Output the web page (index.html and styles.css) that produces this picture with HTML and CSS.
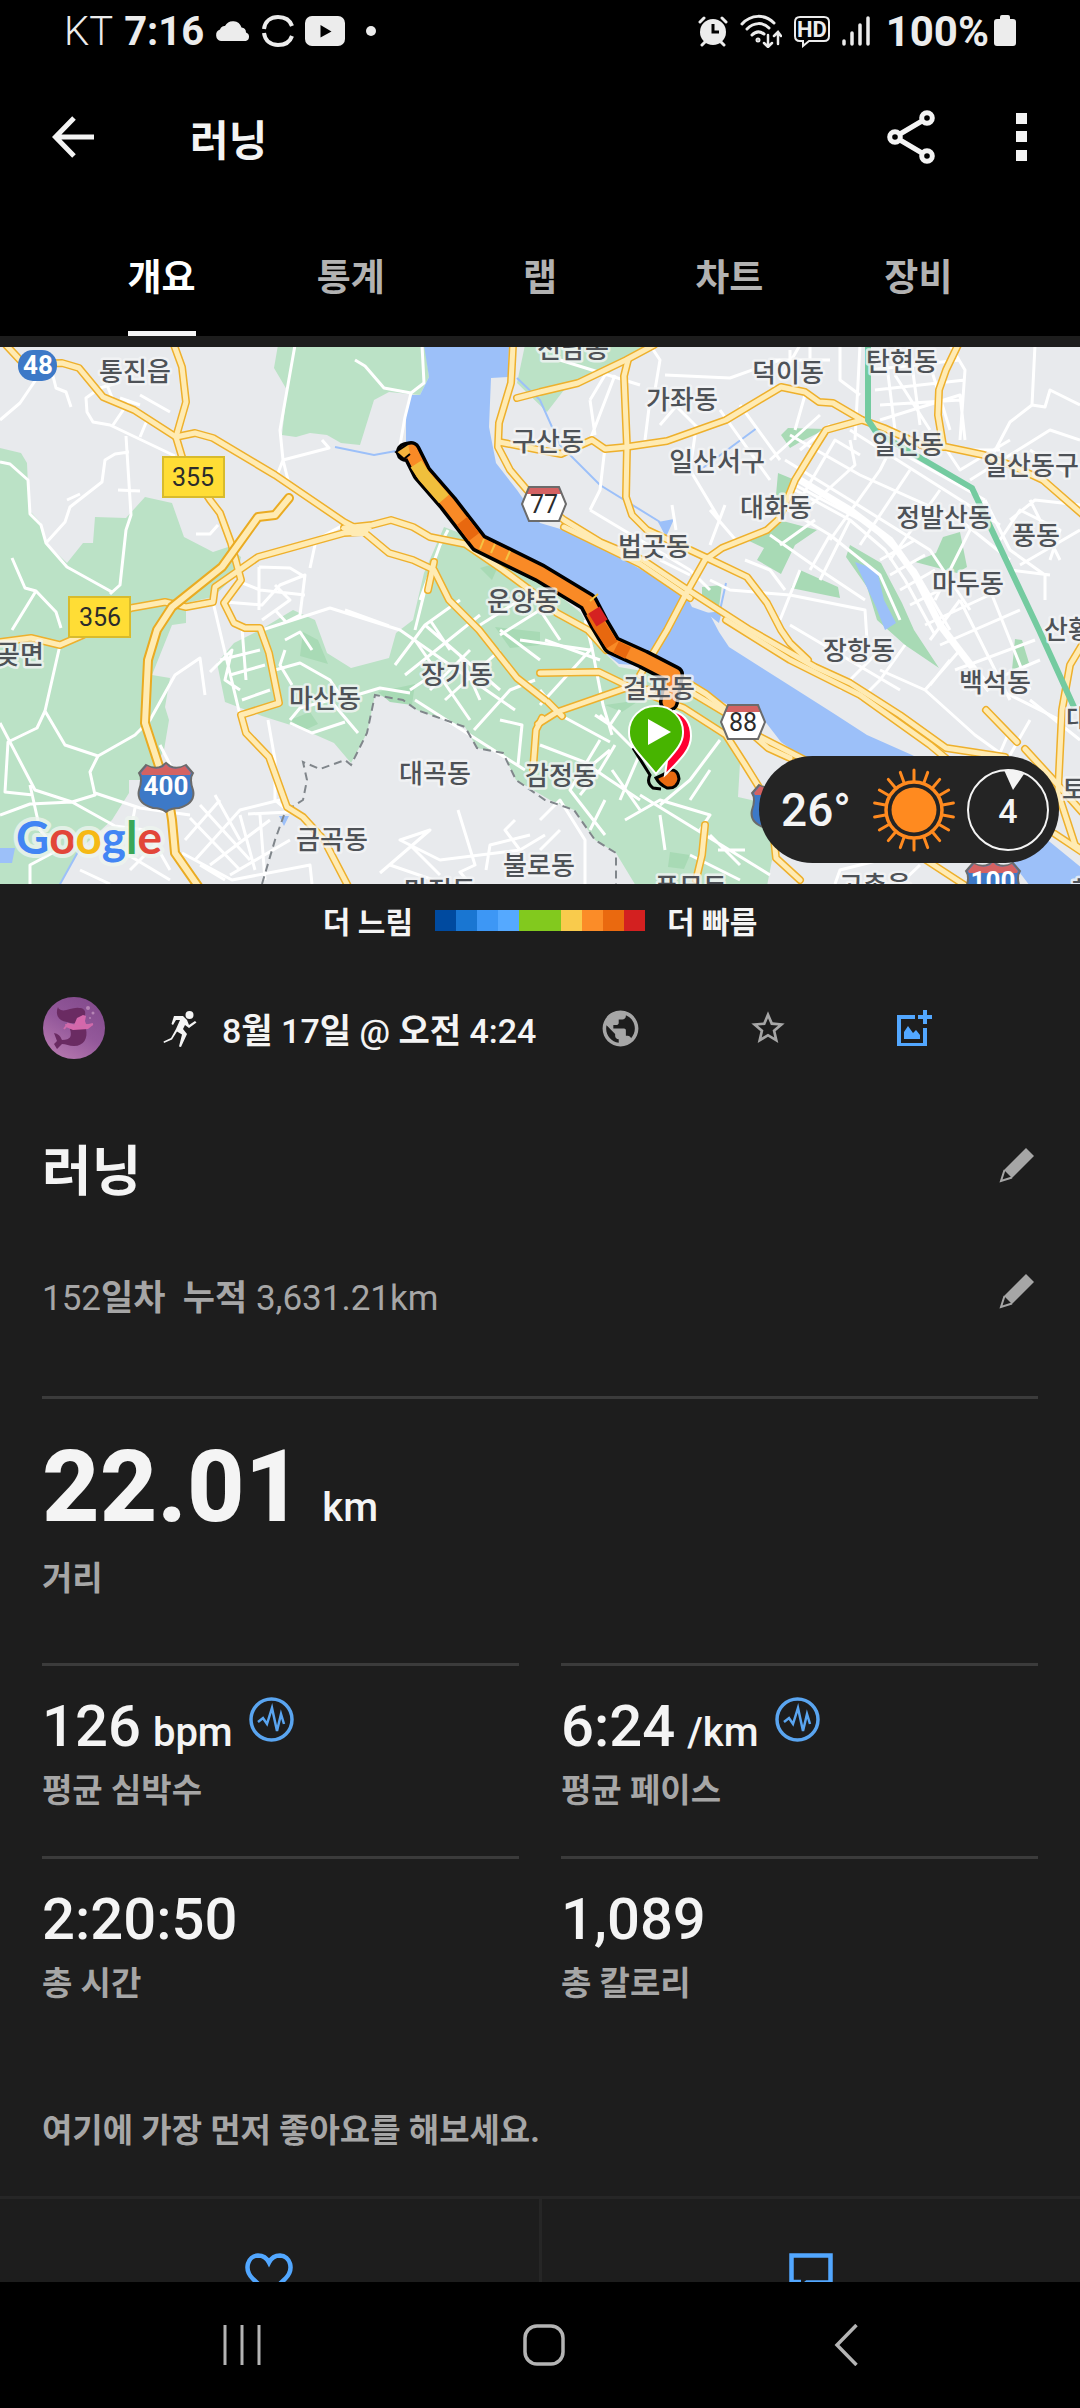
FILE: index.html
```html
<!DOCTYPE html>
<html lang="ko">
<head>
    <meta charset="UTF-8">
    <meta name="viewport" content="width=device-width, initial-scale=1.0">
    <title>러닝</title>
    <link rel="stylesheet" href="styles.css">
</head>
<body>
    <div class="app">
        <div class="status-bar">
            <div class="status-left">
                <span class="carrier">KT</span>
                <span class="clock">7:16</span>
                <svg class="cloud" width="36" height="22" viewBox="0 0 36 22" fill="#ececec"><path d="M6 21a6 6 0 0 1-1-11.500a5 5 0 0 1 5-3.500a9 9 0 0 1 16.500 1.500a5 5 0 0 1 4.500 5a4.500 4.500 0 0 1 0 8.500z"/></svg>
                <svg class="sync" width="32" height="34" viewBox="0 0 32 34" fill="none" stroke="#ececec" stroke-width="4"><path d="M2 15C3 7 9 3 16 3s12 3 14 9M2 19c1 8 7 12 14 12s12-3 14-9"/></svg>
                <svg class="video" width="40" height="30" viewBox="0 0 40 30"><rect width="40" height="30" rx="7" fill="#ececec"/><path d="M15.500 9v12.500l11-6z" fill="#000"/></svg>
                <span class="more-dot"></span>
            </div>
            <div class="status-right">
                <svg width="30" height="32" viewBox="0 0 30 32"><g fill="none" stroke="#ececec" stroke-width="3" stroke-linecap="round"><path d="M2 7l4-4M28 7l-4-4M4 30l3-3M26 30l-3-3"/></g><circle cx="15" cy="17" r="13" fill="#ececec"/><path d="M15 9v8h6" fill="none" stroke="#000" stroke-width="3"/></svg>
                <svg width="42" height="34" viewBox="0 0 42 34" fill="none" stroke="#ececec" stroke-width="3" stroke-linecap="round"><path d="M2 10C11 0 25 0 34 9M7 15c7-7 16-7 22-1M12 21c4-4 8-4 12-1"/><circle cx="18" cy="26" r="1" /><path stroke-width="2.500" d="M28 21v11M24 29l4 4 4-4M38 30V19M34 22l4-4 3 4"/></svg>
                <svg width="36" height="33" viewBox="0 0 36 33"><path d="M6 2h24q5 0 5 5v14q0 5-5 5H15l-6 5v-5H6q-5 0-5-5V7q0-5 5-5z" fill="none" stroke="#ececec" stroke-width="2"/><text x="18" y="22" class="hd">HD</text></svg>
                <svg width="28" height="32" viewBox="0 0 28 32" stroke="#ececec" stroke-width="3.500" stroke-linecap="round"><path d="M2 26v3M10 18v11M18 10v19M26 3v26"/></svg>
                <span class="battery-level">100%</span>
                <svg width="22" height="32" viewBox="0 0 22 32" fill="#ececec"><path d="M6 4V2q0-2 2-2h6q2 0 2 2v2h3q3 0 3 3v21q0 3-3 3H3q-3 0-3-3V7q0-3 3-3z"/></svg>
            </div>
        </div>

        <header class="app-bar">
            <button type="button" class="icon-button" aria-label="뒤로">
                <svg width="42" height="42" viewBox="0 0 42 42" fill="none" stroke="#f4f4f4" stroke-width="5"><path d="M42 21H4M22 2L3.500 21 22 40"/></svg>
            </button>
            <h1 class="app-title">러닝</h1>
            <button type="button" class="icon-button share" aria-label="공유">
                <svg width="48" height="54" viewBox="0 0 48 54" fill="none" stroke="#f4f4f4" stroke-width="5"><path d="M13 24l22-13M13 30l22 13"/><circle cx="8" cy="27" r="5.300"/><circle cx="40" cy="8" r="5.300"/><circle cx="40" cy="46" r="5.300"/></svg>
            </button>
            <button type="button" class="icon-button more" aria-label="더보기">
                <svg width="12" height="48" viewBox="0 0 12 48" fill="#f4f4f4"><path d="M0 0h11v11H0zM0 18h11v11H0zM0 37h11v11H0z"/></svg>
            </button>
        </header>

        <nav class="tabs">
            <button type="button" class="tab active">개요</button>
            <button type="button" class="tab">통계</button>
            <button type="button" class="tab">랩</button>
            <button type="button" class="tab">차트</button>
            <button type="button" class="tab">장비</button>
        </nav>

        <main class="content">
            <section class="map">
                <svg class="map-canvas" viewBox="0 347 1080 537" preserveAspectRatio="xMidYMid slice">
                    <defs>
                        <!-- main roads, stroked twice: casing, then fill -->
                        <g id="roads">
                            <path d="M6 345L20 360L34 364L62 363L79 368L103 397L134 410L176 437L195 433L213 438L275 475L344 522L365 533L389 553L413 560L434 570L449 600L479 630L517 678L545 700"/>
                            <path d="M344 528L372 525L391 520L413 527L430 537L465 544L503 570L530 590L557 613L588 630L606 650"/>
                            <path d="M174 345L182 367L186 402L176 437L182 457L210 500L220 513L231 543L241 580L224 603L234 623L245 628L260 628L269 653L279 703L241 715L246 733L269 757L287 807L303 817L324 840L348 886"/>
                            <path d="M0 642L31 638L60 645L83 635L131 608L165 602L186 607L213 602L215 587L258 557L344 533L362 532"/>
                            <path d="M434 562L428 590"/>
                            <path d="M517 398L540 392L578 383L626 360L654 345"/>
                            <path d="M628 360L624 376L627 447L626 497L632 515L647 530L705 557L747 577L767 603L781 630L790 643L808 660"/>
                            <path d="M513 345L511 383L499 423L498 447L510 470L527 490L564 520L600 542L643 560L688 590L750 630L815 667L850 683L900 715L946 748L1005 757"/>
                            <path d="M564 527L640 564L690 598"/>
                            <path d="M726 620L790 660L860 695L930 745L948 760"/>
                            <path d="M499 442L540 450L561 454L592 440L605 449L626 447L667 441L726 420L781 387L805 392L819 402L833 403L862 420L884 428L926 447L946 447L984 455L1010 465L1043 480L1082 514"/>
                            <path d="M862 420L826 430L814 449L795 480L785 505L778 520L767 530L722 548L705 560L688 590L667 630L640 675"/>
                            <path d="M958 345L946 370L939 390L938 415L943 445"/>
                            <path d="M540 673L599 672L630 687L684 708L726 735L744 763L762 792L772 820L776 858L800 880"/>
                            <path d="M538 724L557 712L626 688L653 690"/>
                            <path d="M533 770L536 730L542 718"/>
                            <path d="M680 678L706 694L760 737L805 760"/>
                            <path d="M684 688L734 718L768 748L790 758"/>
                            <path d="M548 702L562 716"/>
                            <path d="M705 825L702 855L696 880"/>
                            <path d="M986 710L1017 742M1025 749L1058 785L1082 812"/>
                            <path d="M1082 645L1070 665L1062 710L1058 793L1075 845L1082 850"/>
                            <path d="M1055 834L1082 852M926 860L966 886"/>
                        </g>
                        <path id="highway" d="M289 498L275 515L258 517L222 567L172 607L157 630L148 660L145 723L158 763L168 795L172 820L175 853L198 886"/>
                        <path id="route" d="M406 452L411 451L422 473L448 503L479 543L540 573L588 602L599 623L612 645L643 659L674 675L669 702"/>
                        <g id="shield">
                            <path d="M-20 -19q9 5 16 1l4-3 4 3q7 4 16-1l7 8q-4 6 0 17q3 13-14 18q-8 0-13 4q-5-4-13-4q-17-5-14-18q4-11 0-17z" fill="#3d79c7" stroke="#6b6b6b" stroke-width="2"/>
                            <path d="M-19 -18q9 5 16 1l3-3 3 3q7 4 16-1l6 7q-1 2-1 2h-48l-1-2z" fill="#d46262"/>
                        </g>
                        <g id="hexagon">
                            <path d="M-15 -17h30l7 17-7 17h-30l-7-17z" fill="#fff"/>
                            <path d="M-15 -17h30l3 7h-36z" fill="#d46262"/>
                            <path d="M-15 -17h30l7 17-7 17h-30l-7-17z" fill="none" stroke="#6b6b6b" stroke-width="2"/>
                        </g>
                    </defs>

                    <rect y="347" width="1080" height="537" fill="#e8eaed"/>

                    <g class="green">
                        <path d="M278 345H425L429 377L420 395L389 392L374 400L360 445L341 443L327 435L310 433L296 437L282 435L287 390L274 368z"/>
                        <path d="M0 448L21 453L27 463L29 510L41 523L46 543L67 563L83 543H93L95 517L126 518L145 497L172 503L184 537L213 552L228 547L241 557L238 573L213 597L186 603V623L172 625L152 675L170 678L165 707L169 720L164 750L157 763L148 780H129V793L112 820L79 850L59 886H0z"/>
                        <path d="M260 630L293 610L315 620L327 653L351 668L389 658L396 633L413 620L424 573L444 527L465 535L540 580L581 613L602 650L619 667L678 677L719 703L735 712L726 737L740 763L738 797L760 802L778 820L774 850L767 886H636L616 853L595 840L574 810L550 800L516 780L503 753L477 748L465 727L417 710L403 700L375 695L367 733L351 763L334 743L300 728L262 716L225 702L217 663L234 643z"/>
                        <path d="M525 345H650L609 373L564 390L547 412L517 383z"/>
                    </g>
                    <g class="park">
                        <path d="M781 435L788 428L826 429L800 442L790 448z"/>
                        <path d="M778 473L795 480L781 505L776 495z"/>
                        <path d="M779 520L817 530L795 545L781 574L757 560L764 548L747 540z"/>
                        <path d="M800 570L838 587L840 598L791 588z"/>
                        <path d="M850 545L881 563L902 603L914 630L939 668L905 645L877 620L867 587L846 557z"/>
                        <path d="M943 537L960 532L967 567L957 573L915 562L936 553z"/>
                        <path d="M702 587L722 585L719 607L702 600z"/>
                        <path d="M1015 639L1022 640L1029 663L1012 670z"/>
                        <path d="M303 632L318 640L328 664L300 656zM378 692L415 684L412 705L390 702zM290 720L310 712L318 724L305 730z"/>
                        <path d="M495 627L540 632V645L510 648zM480 568L500 562L492 580zM670 852L690 855L684 869L668 867zM605 705L640 700L622 712z"/>
                    </g>
                    <g class="water">
                        <path d="M424 345L429 377L420 395H410L406 417V447L430 473L468 522L489 540L540 570L592 597L614 630L602 650L619 664L678 668L702 692L733 707L764 720L781 742L802 757L900 800L1010 860L1030 886H1082V868L1050 842L1000 800L912 755L867 735L833 713L781 680L729 647L719 632L709 613L692 607L685 593L654 577L616 555L574 533L540 523L517 490L496 463L489 427L491 378L508 377L509 345z"/>
                        <path d="M855 562L877 570L884 600L896 623L885 630L876 607z"/>
                        <path d="M0 848h15l-3 15H0zM279 816h10l-5 10zM658 522l16-3-8 18z"/>
                        <path d="M706 613l16-2-3 12z"/>
                    </g>
                    <path class="stream" d="M335 447L374 455L396 451M517 378L540 400L560 445L600 485L660 522M726 583L719 615M79 850L59 886M700 470L757 428"/>

                    <g class="streets">
                        <path d="M0 420L20 403L37 378M52 372L56 388L66 392L71 407M120 382L100 388L86 398L87 412L93 422L110 425L175 456M126 436L131 515L126 530L120 585L110 594M105 380L113 400M120 398L140 405M140 395L170 412M113 425L130 400M140 437L148 418M0 462L10 464L28 480L30 514L41 525L46 543L67 567L112 592M46 543L65 522L70 507L102 482L105 460L115 454L129 452M12 558L25 588L36 591L56 612L61 628M36 591L12 630M67 500L80 494M118 490L140 491"/>
                        <path d="M295 345L280 430L283 460L290 488M283 460L329 448L322 440M283 460L276 478M355 360L365 366L384 388L411 393L405 417L400 445M411 393L424 383L422 345M196 534L210 534L218 525M310 568L316 540L345 524"/>
                        <path d="M259 567V610M225 602L262 605L280 585L305 575L300 615L286 622L275 610M240 582L260 590L305 595M259 567L290 568L305 577M262 620L290 600L275 585M213 602L222 640L240 715M242 628L246 680M268 720L275 760L275 800L287 810M262 630L330 608L400 630L450 665L515 710M345 610L389 626M210 672L232 650L225 680L240 690M220 660L260 650M230 675L265 665M242 700L270 690M275 670L300 663L330 680L340 695M285 650L280 665L292 685M285 640L300 632L312 650M290 720L300 708L330 700L358 733M290 723L312 733L345 722M340 700L380 688L410 693"/>
                        <path d="M60 645L45 711L37 728L8 742L5 792L33 795M45 711L65 745L98 756L135 735L150 720L175 675L200 658L205 695M0 723L35 790L72 802L115 826L145 830M98 756L90 772L95 795L72 802L30 804L0 815M95 793L140 808L190 815M30 785L40 830L58 850L30 865V884M135 808L130 835M160 745L178 780"/>
                        <path d="M190 818L240 870M200 805L250 860M215 795L240 840M185 840L220 800M195 860L240 810L280 800M210 865L270 820M230 875L290 840M200 865L225 880M240 815L255 870M260 815L265 880M120 850L170 880M130 870L160 840M150 835L170 870M80 870L110 884M248 814L290 812M182 853L232 880L310 865L312 884"/>
                    </g>
                    <g class="streets">
                        <path d="M380 873L430 830L400 840L440 860L520 850L545 835M390 865L445 884M470 884L460 872L475 865L458 810M486 870L490 845L530 835M410 845L440 875M515 820L505 830L520 850M540 820L560 800L585 840V884M540 850L560 830"/>
                        <path d="M395 665L425 625L460 600M405 675L480 615M415 640L470 720M425 625L500 690M430 690L470 650M445 700L500 650M410 690L440 670M460 655L480 700M415 700L525 770M500 720L522 725L518 765M474 730L510 690L535 680M420 600L440 545L448 530M415 630L425 590M480 625L520 600L550 590M500 635L540 610L560 640M520 640L590 650M430 620L450 650M500 630L540 660"/>
                        <path d="M540 705L592 648L585 620M592 648L603 705L612 735M540 745L592 765L610 750M600 715L640 755M580 795L600 770L615 745M595 715L610 725L620 710M650 730L620 800M640 795L770 875M660 805L690 780L720 740M600 740L570 790L605 835M640 800L610 780L588 765M625 820L660 800L710 815L700 830M660 815L665 850M612 770L640 810M690 800L710 770M605 800L590 830M690 855L740 880M710 835L740 865M718 850L745 850M545 640L600 660M540 690L560 715L610 742"/>
                    </g>
                    <!-- Ilsan street grid -->
                    <g class="streets">
                        <path d="M790 435L860 475L960 520L1010 560M785 460L850 500L930 550L970 610M800 450L830 425M780 505L830 535L880 575L900 620M795 485L870 525L915 570L950 630M850 430L1000 525M905 455L985 500M800 515L855 465L850 440M830 540L880 470L890 450M860 545L910 470M890 560L940 490M810 570L830 535M935 600L985 500M780 545L815 520M820 580L850 520M800 500L835 440L860 455"/>
                        <path class="avenue" d="M800 480L850 510L890 540L915 575L940 625L990 690"/>
                        <path d="M795 490L850 520L885 550L905 580L935 635M880 560L915 540M890 575L925 555M900 590L935 570M910 605L950 585M925 625L1000 590M940 645L1020 610M955 670L1035 640M970 690L1040 660M960 600L1010 700M990 590L1030 690M930 640L960 600M905 645L880 680L860 700M1010 570L1050 575M985 500L1010 550L1045 575V600M1010 520L1035 500L1080 505M1000 540L1020 510L1060 530L1050 560M1020 565L1080 530M1030 500L1060 560"/>
                        <path d="M870 370L960 360M875 390L965 380M880 405L960 400M885 350L895 430M910 350L920 425M930 365L950 430M895 375L930 430M880 420L960 395L965 440M840 345V380L860 395M860 345L855 440M800 345L780 380M805 395L795 430M770 360L830 360M790 350V375M810 345V370M950 345L965 370L960 440M940 440L960 470L1010 440M970 450L1000 450M1035 345L1032 405L1045 407L1050 390L1080 405M1032 405L1010 422L990 460M970 480L1050 430L1080 440M1030 450L1070 475"/>
                        <path d="M650 345L660 360L655 390M665 375L730 378L780 360M665 395L700 430M690 390L660 425M650 400L645 440M695 435L690 470L720 520M720 410L770 480M740 405L780 460M770 460L820 415M710 510L740 545M725 505L710 545M590 510L600 490L605 447M590 510L690 570L710 590M590 400L605 375M590 400L595 435M615 375L590 440M640 385L560 360M710 580L730 590L790 595L865 610L867 640M780 620L800 570M790 625L900 690M830 660L860 640M880 670L925 690L975 735L1000 753L1010 730M930 685L950 660M1030 700L1080 740M925 690L960 650M875 655L840 690M745 560L770 570L785 590M770 535L820 570L865 600M660 560L690 575M672 505L676 530"/>
                        <path d="M835 884L840 870L880 860M900 884L920 865M1010 755L1030 720M1000 690L1060 720"/>
                    </g>
                    <path class="boundary" d="M262 884L275 840L284 815M287 810L303 800L307 780L303 762L320 769L345 760L351 765L367 733L375 695L403 700L417 710L465 727L477 748L503 753L516 780L545 800L574 810L595 840L616 853V884"/>

                    <use href="#roads" class="road-casing"/>
                    <use href="#roads" class="road-fill"/>
                    <use href="#highway" class="highway-casing"/>
                    <use href="#highway" class="highway-fill"/>
                    <path d="M340 528l12 8h12l8-8-12-4z" fill="#ffebb3"/>
                    <path class="rail" d="M868 345V420L876 432L972 488L1039 630L1074 707"/>

                    <use href="#route" class="route-outline"/>
                    <use href="#route" class="route-line"/>
                    <path class="route-slow" d="M416 464L424 476L444 499"/>
                    <path class="route-fast" d="M462 521L474 537M592 612L599 625L612 645M616 647L628 653"/>
                    <path class="route-fastest" d="M594 610L602 623"/>
                    <path class="route-tick" d="M480 549l4-10M491 553l4-9M506 560l4-9M590 601l8-7"/>
                    <path d="M408 444l-12 8 8 7 6-5" fill="#f4b33d" stroke="#000" stroke-width="2"/>
                    <path d="M633 748L650 775q-4 8 3 13l8 1" fill="none" stroke="#000" stroke-width="3"/>
                    <path d="M656 778q8-3 14-8q8-1 9 9q-2 10-12 9q-8-4-11-10z" fill="#ea6a10" stroke="#000" stroke-width="3"/>

                    <g class="shield-text">
                        <rect x="18" y="350" width="39" height="31" rx="15" fill="#3d79c7"/>
                        <text x="38" y="374">48</text>
                        <use href="#shield" x="166" y="784"/>
                        <text x="166" y="795">400</text>
                        <use href="#shield" x="779" y="804"/>
                        <use href="#shield" x="993" y="882"/>
                        <text x="993" y="890">100</text>
                    </g>
                    <g class="route-number">
                        <rect x="163" y="457" width="61" height="40"/>
                        <text x="193" y="486">355</text>
                        <rect x="69" y="597" width="61" height="40"/>
                        <text x="100" y="626">356</text>
                        <use href="#hexagon" x="544" y="504"/>
                        <text x="544" y="513">77</text>
                        <use href="#hexagon" x="743" y="722"/>
                        <text x="743" y="731">88</text>
                    </g>

                    <g class="place">
                        <text x="135" y="381">통진읍</text>
                        <text x="573" y="358">선남동</text>
                        <text x="682" y="409">가좌동</text>
                        <text x="788" y="382">덕이동</text>
                        <text x="902" y="371">탄현동</text>
                        <text x="548" y="451">구산동</text>
                        <text x="717" y="471">일산서구</text>
                        <text x="908" y="454">일산동</text>
                        <text x="1031" y="475">일산동구</text>
                        <text x="776" y="517">대화동</text>
                        <text x="654" y="556">법곳동</text>
                        <text x="944" y="527">정발산동</text>
                        <text x="1036" y="545">풍동</text>
                        <text x="968" y="593">마두동</text>
                        <text x="1080" y="639">산황동</text>
                        <text x="523" y="611">운양동</text>
                        <text x="859" y="660">장항동</text>
                        <text x="995" y="692">백석동</text>
                        <text x="8" y="664">대곶면</text>
                        <text x="325" y="708">마산동</text>
                        <text x="457" y="684">장기동</text>
                        <text x="659" y="698">걸포동</text>
                        <text x="435" y="783">대곡동</text>
                        <text x="561" y="785">감정동</text>
                        <text x="332" y="849">금곡동</text>
                        <text x="539" y="875">불로동</text>
                        <text x="440" y="900">마전동</text>
                        <text x="691" y="897">풍무동</text>
                        <text x="875" y="895">고촌읍</text>
                        <text x="1102" y="728">대장동</text>
                        <text x="1098" y="799">토당동</text>
                        <text x="1096" y="900">행주</text>
                    </g>

                    <path d="M674 711q17 6 17 25c0 14-11 24-26 39z" fill="#ff0032" stroke="#fff" stroke-width="2"/>
                    <path d="M656 706a26 26 0 0 1 27 27c0 14-14 24-27 41c-13-17-27-27-27-41a26 26 0 0 1 27-27z" fill="#47b400" stroke="#fff" stroke-width="2"/>
                    <path d="M648 719v26l23-13z" fill="#fff"/>

                    <text class="google" x="16" y="854"><tspan class="g-blue">G</tspan><tspan class="g-red">o</tspan><tspan class="g-yellow">o</tspan><tspan class="g-blue">g</tspan><tspan class="g-green">l</tspan><tspan class="g-red">e</tspan></text>
                </svg>

                <div class="weather">
                    <span class="temperature">26°</span>
                    <svg width="84" height="84" viewBox="-42 -42 84 84" fill="none" stroke="#ff8a1f">
                        <circle r="22.500" fill="#ff8a1f" stroke="none"/>
                        <circle r="28" stroke-width="3.500"/>
                        <g stroke-width="3" stroke-linecap="round">
                            <path id="rays" d="M0-29V-40M0 29V40"/>
                            <use href="#rays" transform="rotate(20)"/>
                            <use href="#rays" transform="rotate(40)"/>
                            <use href="#rays" transform="rotate(60)"/>
                            <use href="#rays" transform="rotate(80)"/>
                            <use href="#rays" transform="rotate(100)"/>
                            <use href="#rays" transform="rotate(120)"/>
                            <use href="#rays" transform="rotate(140)"/>
                            <use href="#rays" transform="rotate(160)"/>
                        </g>
                    </svg>
                    <svg width="84" height="84" viewBox="-42 -42 84 84">
                        <circle r="40" fill="none" stroke="#f4f4f4" stroke-width="2"/>
                        <path d="M-4-40Q6-41 16-36L5-20z" fill="#f4f4f4"/>
                        <text class="wind" x="0" y="13">4</text>
                    </svg>
                </div>
            </section>

            <div class="legend">
                <span>더 느림</span>
                <div class="scale">
                    <i class="step pace-1"></i>
                    <i class="step pace-2"></i>
                    <i class="step pace-3"></i>
                    <i class="step pace-4"></i>
                    <i class="step pace-5"></i>
                    <i class="step pace-5"></i>
                    <i class="step pace-6"></i>
                    <i class="step pace-7"></i>
                    <i class="step pace-8"></i>
                    <i class="step pace-9"></i>
                </div>
                <span>더 빠름</span>
            </div>

            <div class="meta">
                <svg class="avatar" width="62" height="62" viewBox="0 0 62 62">
                    <defs>
                        <linearGradient id="sea" x1="0.200" y1="1" x2="0.800" y2="0"><stop offset="0" stop-color="#b87ab0"/><stop offset="0.500" stop-color="#93589a"/><stop offset="1" stop-color="#824a8c"/></linearGradient>
                    </defs>
                    <circle cx="31" cy="31" r="31" fill="url(#sea)"/>
                    <path d="M15 10c-3 7 0 14 9 15c6 2 12 3 18-7c1-4-1-7-6-7c-6-1-14 4-18 2q-3-1-3-3z" fill="#6a2b62"/>
                    <path d="M27 32h16c2 9-2 17-12 17c-5 0-8-2-12-2l-5 5-3-5 3-3-3-8q6 1 8 7c9 0 10-4 8-11z" fill="#6a2b62"/>
                    <path d="M40 18l3 1-1 5 1 3 7 1-5 4-15 1-7-3-1-3 9 1 3-7z" fill="#d567ab"/>
                    <path d="M21 32l4-5 12 3 13-3" fill="none" stroke="#cf6bab" stroke-width="2"/>
                    <circle cx="45" cy="11" r="2" fill="#b685b5"/><circle cx="50" cy="16" r="1.500" fill="#b685b5"/><circle cx="47" cy="21" r="1" fill="#b685b5"/>
                </svg>
                <svg class="runner" width="34" height="37" viewBox="0 0 34 37" fill="#f4f4f4"><circle cx="26.500" cy="5" r="4"/><path d="M11 6l9 0 4 4 2 5 6-4 1.500 1.500L26 18l-4-3-2 4 4 5-6 13-2-.500 3-12-5-3-5 8L1 33 .500 31.500 8 28l5-9 4-9h-4l-3 5-1.500-1z"/></svg>
                <span class="date">8<b>월</b> 17<b>일</b> @ <b>오전</b> 4:24</span>
                <button type="button" class="meta-button" aria-label="공개">
                    <svg width="43" height="43" viewBox="0 0 24 24" fill="#a6a6a6"><path d="M12 2C6.480 2 2 6.480 2 12s4.480 10 10 10 10-4.480 10-10S17.520 2 12 2zm-1 17.930c-3.950-.49-7-3.850-7-7.930 0-.62.080-1.210.210-1.790L9 15v1c0 1.100.9 2 2 2v1.930zm6.900-2.540c-.26-.81-1-1.390-1.900-1.390h-1v-3c0-.55-.45-1-1-1H8v-2h2c.55 0 1-.45 1-1V7h2c1.100 0 2-.9 2-2v-.41c2.930 1.190 5 4.060 5 7.410 0 2.080-.8 3.970-2.100 5.390z"/></svg>
                </button>
                <button type="button" class="meta-button" aria-label="즐겨찾기">
                    <svg width="40" height="40" viewBox="0 0 24 24" fill="#a6a6a6"><path d="M22 9.240l-7.190-.62L12 2 9.190 8.630 2 9.240l5.460 4.730L5.820 21 12 17.270 18.180 21l-1.630-7.030L22 9.240zM12 15.400l-3.760 2.270 1-4.280-3.320-2.880 4.380-.38L12 6.100l1.710 4.040 4.380.38-3.320 2.880 1 4.280L12 15.400z"/></svg>
                </button>
                <button type="button" class="meta-button" aria-label="사진 추가">
                    <svg width="36" height="36" viewBox="0 0 36 36" fill="#52a7ff"><path d="M0 5h18v4H4v24h22V18h4v18H0z"/><path d="M26 0h4v5h5v4h-5v5h-4V9h-5V5h5zM7 29v-7l4-6 5 7 3-3 4 5v4z"/></svg>
                </button>
            </div>

            <div class="edit-row title-row">
                <h2 class="activity-title">러닝</h2>
                <button type="button" class="icon-button" aria-label="제목 편집">
                    <svg width="36" height="36" viewBox="0 0 36 36"><path d="M27 1l8 8-22 22-8-8z" fill="#a6a6a6"/><path d="M5.500 23L2 34l11-3.500" fill="none" stroke="#a6a6a6" stroke-width="2"/></svg>
                </button>
            </div>
            <div class="edit-row note-row">
                <p class="note">152<b>일차</b>&nbsp; <b>누적</b> 3,631.21km</p>
                <button type="button" class="icon-button" aria-label="메모 편집">
                    <svg width="36" height="36" viewBox="0 0 36 36"><path d="M27 1l8 8-22 22-8-8z" fill="#a6a6a6"/><path d="M5.500 23L2 34l11-3.500" fill="none" stroke="#a6a6a6" stroke-width="2"/></svg>
                </button>
            </div>

            <section class="stats">
                <div class="stat distance">
                    <div class="value"><span class="number">22.01</span><span class="unit">km</span></div>
                    <div class="label">거리</div>
                </div>
                <div class="stat">
                    <div class="value">
                        <span class="number">126</span><span class="unit">bpm</span>
                        <svg class="pulse" width="45" height="45" viewBox="0 0 45 45" fill="none" stroke="#5aa5f0"><circle cx="22.500" cy="22.500" r="20.500" stroke-width="3.500"/><path d="M9 25l5-4 4 6 5-16 5 23 4-17 3 10" stroke-width="2.500"/></svg>
                    </div>
                    <div class="label">평균 심박수</div>
                </div>
                <div class="stat">
                    <div class="value">
                        <span class="number">6:24</span><span class="unit">/km</span>
                        <svg class="pulse" width="45" height="45" viewBox="0 0 45 45" fill="none" stroke="#5aa5f0"><circle cx="22.500" cy="22.500" r="20.500" stroke-width="3.500"/><path d="M9 25l5-4 4 6 5-16 5 23 4-17 3 10" stroke-width="2.500"/></svg>
                    </div>
                    <div class="label">평균 페이스</div>
                </div>
                <div class="stat">
                    <div class="value"><span class="number">2:20:50</span></div>
                    <div class="label">총 시간</div>
                </div>
                <div class="stat">
                    <div class="value"><span class="number">1,089</span></div>
                    <div class="label">총 칼로리</div>
                </div>
            </section>

            <p class="likes">여기에 가장 먼저 좋아요를 해보세요.</p>

            <div class="actions">
                <button type="button" class="action" aria-label="좋아요">
                    <svg width="48" height="44" viewBox="0 0 48 44" fill="none" stroke="#52a7ff" stroke-width="4.500"><path d="M24 41L8 26C-2 16 3 3 13 2.500c5 0 9 3 11 7c2-4 6-7 11-7c10 .5 15 13.500 5 23.500z"/></svg>
                </button>
                <button type="button" class="action" aria-label="댓글">
                    <svg width="44" height="44" viewBox="0 0 44 44" fill="none" stroke="#52a7ff" stroke-width="4.500"><path d="M2.500 2.500h39v27H18L2.500 42z"/><path d="M2 29h10"/></svg>
                </button>
            </div>
        </main>

        <nav class="system-nav">
            <button type="button" class="nav-button" aria-label="최근 앱">
                <svg width="38" height="42" viewBox="0 0 38 42" stroke="#b4b4b4" stroke-width="3"><path d="M2 1v40M19 1v40M36 1v40"/></svg>
            </button>
            <button type="button" class="nav-button" aria-label="홈">
                <svg width="42" height="42" viewBox="0 0 42 42" fill="none" stroke="#b4b4b4" stroke-width="3.500"><rect x="2" y="2" width="38" height="38" rx="12"/></svg>
            </button>
            <button type="button" class="nav-button" aria-label="뒤로">
                <svg width="24" height="42" viewBox="0 0 24 42" fill="none" stroke="#b4b4b4" stroke-width="3.500"><path d="M22.500 1L3 21l19.500 20"/></svg>
            </button>
        </nav>
    </div>
</body>
</html>
```
FILE: styles.css
```css
* {
    box-sizing: border-box;
}
body {
    margin: 0;
    background-color: #000;
    color: #f4f4f4;
    font-family: Roboto, "Noto Sans CJK KR", sans-serif;
    font-size: 34px;
}
h1, h2, p {
    margin: 0;
}
button {
    padding: 0;
    border: none;
    background: none;
    color: inherit;
    font: inherit;
    cursor: pointer;
}
svg {
    display: block;
    flex: none;
}
.app {
    display: flex;
    flex-direction: column;
    height: 100vh;
}

/* status bar */
.status-bar {
    display: flex;
    justify-content: space-between;
    align-items: center;
    height: 62px;
    padding: 0 64px;
    color: #ececec;
    font-size: 40px;
}
.status-left, .status-right {
    display: flex;
    align-items: center;
    gap: 12px;
}
.status-left {
    gap: 11px;
}
.carrier {
    font-weight: 300;
}
.clock, .battery-level {
    font-weight: 700;
}
.more-dot {
    width: 10px;
    height: 10px;
    margin-left: 10px;
    border-radius: 50%;
    background-color: #ececec;
}
.battery-level {
    margin: 0 -7px 0 4px;
    font-size: 42px;
}
.hd {
    fill: #ececec;
    font-size: 22px;
    font-weight: 700;
    text-anchor: middle;
}

/* app bar */
.app-bar {
    display: flex;
    align-items: center;
    height: 150px;
    padding: 0 52px;
}
.app-title {
    flex: 1;
    margin-left: 96px;
    font-size: 42px;
    font-weight: 700;
}
.share {
    margin-right: 81px;
}
.tabs {
    display: flex;
    height: 124px;
    padding: 0 67px;
}
.tab {
    flex: 1;
    display: flex;
    flex-direction: column;
    align-items: center;
    padding-top: 39px;
    color: #b2b2b2;
    font-size: 37px;
    font-weight: 700;
    line-height: 56px;
}
.tab.active {
    color: #fff;
}
.tab.active::after {
    content: "";
    width: 68px;
    height: 5px;
    margin-top: 24px;
    background-color: #f4f4f4;
}

.content {
    flex: 1;
    min-height: 0;
    padding-top: 11px;
    overflow: hidden;
    background-color: #1d1d1d;
}

/* map */
.map {
    position: relative;
}
.map-canvas {
    width: 100%;
    aspect-ratio: 1080 / 537;
}
.green {
    fill: #bbe2c6;
}
.park {
    fill: #a8dab5;
}
.water {
    fill: #9cc0f9;
}
.stream {
    fill: none;
    stroke: #9cc0f9;
    stroke-width: 2;
}
.streets {
    fill: none;
    stroke: #fff;
    stroke-width: 3;
    stroke-linejoin: round;
}
.avenue {
    stroke-width: 7;
}
.boundary {
    fill: none;
    stroke: #80868b;
    stroke-width: 2;
    stroke-dasharray: 8 5;
}
.road-casing, .road-fill, .highway-casing, .highway-fill {
    fill: none;
    stroke-linejoin: round;
    stroke-linecap: round;
}
.road-casing {
    stroke: #eeb02c;
    stroke-width: 8;
}
.road-fill {
    stroke: #ffebb3;
    stroke-width: 5;
}
.highway-casing {
    stroke: #eaab22;
    stroke-width: 10;
}
.highway-fill {
    stroke: #ffebb3;
    stroke-width: 6;
}
.rail {
    fill: none;
    stroke: #74cba0;
    stroke-width: 6;
}
.route-outline, .route-line {
    fill: none;
    stroke-linejoin: round;
    stroke-linecap: round;
}
.route-outline {
    stroke: #000;
    stroke-width: 20;
}
.route-line {
    stroke: #f98a26;
    stroke-width: 13;
}
.route-slow, .route-fast, .route-fastest, .route-tick {
    fill: none;
    stroke-width: 13;
}
.route-slow {
    stroke: #f0bf3c;
}
.route-fast {
    stroke: #e8680f;
}
.route-fastest {
    stroke: #d52221;
}
.route-tick {
    stroke: #f5c342;
    stroke-width: 2;
}
.shield-text text {
    fill: #fff;
    font-size: 26px;
    font-weight: 700;
    text-anchor: middle;
}
.route-number {
    text-anchor: middle;
}
.route-number rect {
    fill: #ffdd35;
    stroke: #d8bb2c;
    stroke-width: 2;
}
.route-number text {
    fill: #2b2b2b;
    font-size: 25px;
}
.place {
    fill: #4e5257;
    stroke: #f4f5f6;
    stroke-width: 5;
    stroke-linejoin: round;
    stroke-opacity: 0.8;
    paint-order: stroke;
    font-size: 26px;
    font-weight: 500;
    text-anchor: middle;
}
.google {
    stroke: #eef5ef;
    stroke-width: 8;
    stroke-opacity: 0.8;
    stroke-linejoin: round;
    paint-order: stroke;
    font-family: Lato, sans-serif;
    font-size: 46px;
    font-weight: 700;
}
.g-blue {
    fill: #4285f4;
}
.g-red {
    fill: #e24639;
}
.g-yellow {
    fill: #f6b914;
}
.g-green {
    fill: #3aa757;
}
.weather {
    position: absolute;
    right: 21px;
    bottom: 21px;
    display: flex;
    align-items: center;
    gap: 10px;
    width: 300px;
    height: 107px;
    padding: 0 9px 0 22px;
    border-radius: 54px;
    background-color: #242424;
}
.temperature {
    flex: 1;
    font-size: 46px;
    font-weight: 500;
}
.wind {
    fill: #f4f4f4;
    font-size: 34px;
    font-weight: 500;
    text-anchor: middle;
}

.legend {
    display: flex;
    justify-content: center;
    align-items: center;
    gap: 22px;
    height: 72px;
    font-size: 30px;
    font-weight: 700;
}
.scale {
    display: flex;
}
.step {
    width: 21px;
    height: 21px;
}
.pace-1 { background-color: #004a9f; }
.pace-2 { background-color: #1976d2; }
.pace-3 { background-color: #3d97f5; }
.pace-4 { background-color: #55a9ff; }
.pace-5 { background-color: #82c91e; }
.pace-6 { background-color: #f9cb4c; }
.pace-7 { background-color: #fb8c28; }
.pace-8 { background-color: #ea690f; }
.pace-9 { background-color: #d32020; }

/* activity details */
.meta {
    display: flex;
    align-items: center;
    height: 144px;
    padding: 0 92px 0 43px;
}
.runner {
    margin-left: 58px;
}
.date {
    flex: 1;
    margin-left: 25px;
    font-weight: 500;
    white-space: nowrap;
}
.meta-button {
    display: flex;
    justify-content: center;
    width: 147px;
}
.edit-row {
    display: flex;
    justify-content: space-between;
    align-items: center;
    padding: 0 45px 0 42px;
}
.title-row {
    height: 130px;
}
.note-row {
    height: 122px;
}
.activity-title {
    padding-top: 16px;
    font-size: 54px;
    font-weight: 700;
    line-height: 64px;
}
.note {
    padding-top: 16px;
    color: #a6a6a6;
    font-size: 35px;
    line-height: 44px;
}
.stats {
    display: grid;
    grid-template-columns: 1fr 1fr;
    column-gap: 42px;
    margin: 44px 42px 0;
}
.stat {
    padding: 24px 0 43px;
    border-top: 3px solid #3b3b3b;
}
.value {
    display: flex;
    align-items: baseline;
    font-size: 58px;
    font-weight: 500;
    line-height: 72px;
}
.unit {
    margin-left: 12px;
    font-size: 40px;
    line-height: 48px;
}
.pulse {
    align-self: flex-start;
    margin: 7px 0 0 16px;
}
.label {
    margin-top: 7px;
    color: #a6a6a6;
    font-size: 33px;
    font-weight: 700;
    line-height: 44px;
}
.distance {
    grid-column: 1 / -1;
    padding: 28px 0 62px;
}
.distance .number {
    font-size: 100px;
    font-weight: 800;
    line-height: 120px;
}
.distance .unit {
    margin-left: 20px;
}
.distance .label {
    margin-top: 10px;
}
.likes {
    padding: 60px 42px 43px;
    color: #a6a6a6;
    font-size: 33px;
    font-weight: 700;
    line-height: 44px;
}
.actions {
    display: flex;
    border-top: 3px solid #262626;
}
.action {
    flex: 1;
    display: flex;
    justify-content: center;
    padding: 54px 0;
}
.action + .action {
    border-left: 3px solid #262626;
}

/* system navigation */
.system-nav {
    display: flex;
    justify-content: center;
    height: 126px;
    padding-left: 7px;
}
.nav-button {
    display: flex;
    justify-content: center;
    align-items: center;
    width: 302px;
}
```
